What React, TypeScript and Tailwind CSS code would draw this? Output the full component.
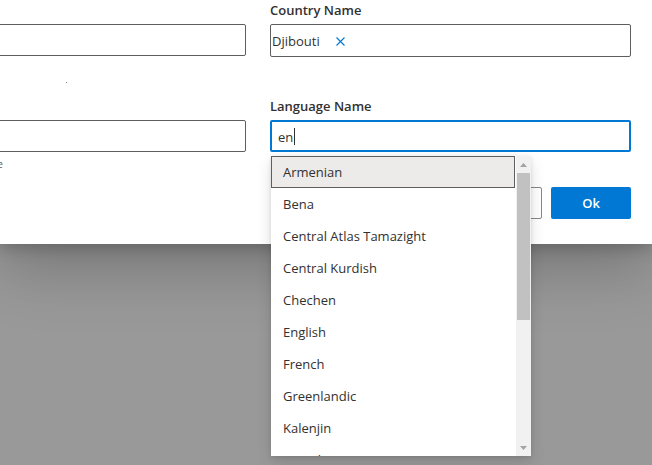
const languages = [
  'Armenian',
  'Bena',
  'Central Atlas Tamazight',
  'Central Kurdish',
  'Chechen',
  'English',
  'French',
  'Greenlandic',
  'Kalenjin',
  'Koyraboro Senni',
];

function ScrollArrow({ up }: { up?: boolean }) {
  return (
    <svg width="7" height="4" viewBox="0 0 7 4">
      <path d={up ? 'M0 4 L3.5 0 L7 4 Z' : 'M0 0 L3.5 4 L7 0 Z'} fill="#a3a3a3" />
    </svg>
  );
}

export default function App() {
  return (
    <div
      className="relative h-[465px] w-[652px] overflow-hidden bg-[#999999] text-[13px] text-[#323130]"
      style={{ fontFamily: '"Open Sans", "Noto Sans", Arial, sans-serif' }}
    >
      {/* Dialog */}
      <div className="flex h-[244px] w-full bg-white shadow-[0_25px_57px_rgba(0,0,0,0.22),0_5px_14px_rgba(0,0,0,0.18)]">
        {/* Left column, cut off by the window */}
        <div className="-ml-[20px] flex w-[266px] flex-col">
          <div className="mt-[24px] h-[32px] rounded-[2px] border border-[#605e5c]" />
          <div className="ml-[86px] mt-[26px] h-[1px] w-[1px] bg-[#8a8886]" />
          <div className="mt-[37px] h-[32px] rounded-[2px] border border-[#605e5c]" />
          <div className="mt-[4px] flex w-[23px] justify-end whitespace-nowrap text-[11px] leading-[16px] text-[#605e5c]">
            Enter a valid name
          </div>
        </div>

        {/* Right column */}
        <div className="ml-[24px] flex w-[361px] flex-col">
          <label className="h-[20px] font-semibold leading-[20px]">Country Name</label>
          <div className="mt-[4px] flex h-[33px] items-center rounded-[2px] border border-[#605e5c] pl-[1px] pt-[1px]">
            <span className="leading-[20px]">Djibouti</span>
            <svg className="ml-[16px]" width="9" height="9" viewBox="0 0 9 9">
              <path d="M0.5 0.5 L8.5 8.5 M8.5 0.5 L0.5 8.5" stroke="#0078d4" strokeWidth="1.1" />
            </svg>
          </div>

          <label className="mt-[39px] h-[20px] font-semibold leading-[20px]">Language Name</label>
          <div className="relative mt-[4px]">
            <div className="flex h-[32px] items-center rounded-[2px] border-2 border-[#0078d4] pl-[6px] pt-[1px]">
              <span className="leading-[20px]">en</span>
              <span className="ml-[1px] h-[17px] w-[1px] bg-[#323130]" />
            </div>

            {/* Suggestions callout */}
            <div className="absolute left-[1px] top-[36px] z-10 flex h-[300px] w-[260px] overflow-hidden bg-white shadow-[0_6px_14px_rgba(0,0,0,0.13),0_1px_4px_rgba(0,0,0,0.11)]">
              <div className="flex-1">
                {languages.map((lang, i) => (
                  <div
                    key={lang}
                    className={
                      i === 0
                        ? 'flex h-[32px] items-center border border-[#605e5c] bg-[#edebe9] pl-[11px] pt-[1px]'
                        : 'flex h-[32px] items-center pl-[12px] pt-[1px]'
                    }
                  >
                    {lang}
                  </div>
                ))}
              </div>
              <div className="ml-[1px] flex w-[15px] flex-col items-center bg-[#f1f1f1]">
                <div className="flex h-[17px] items-center justify-center">
                  <ScrollArrow up />
                </div>
                <div className="h-[147px] w-[13px] bg-[#c1c1c1]" />
                <div className="flex-1" />
                <div className="flex h-[17px] items-center justify-center">
                  <ScrollArrow />
                </div>
              </div>
            </div>
          </div>

          <div className="mt-[35px] flex justify-end gap-[9px]">
            <button className="h-[32px] w-[80px] rounded-[2px] border border-[#8a8886] bg-white pt-[1px] font-semibold">
              Cancel
            </button>
            <button className="h-[32px] w-[80px] rounded-[2px] bg-[#0078d4] pt-[1px] font-semibold text-white">
              Ok
            </button>
          </div>
        </div>
      </div>
    </div>
  );
}
